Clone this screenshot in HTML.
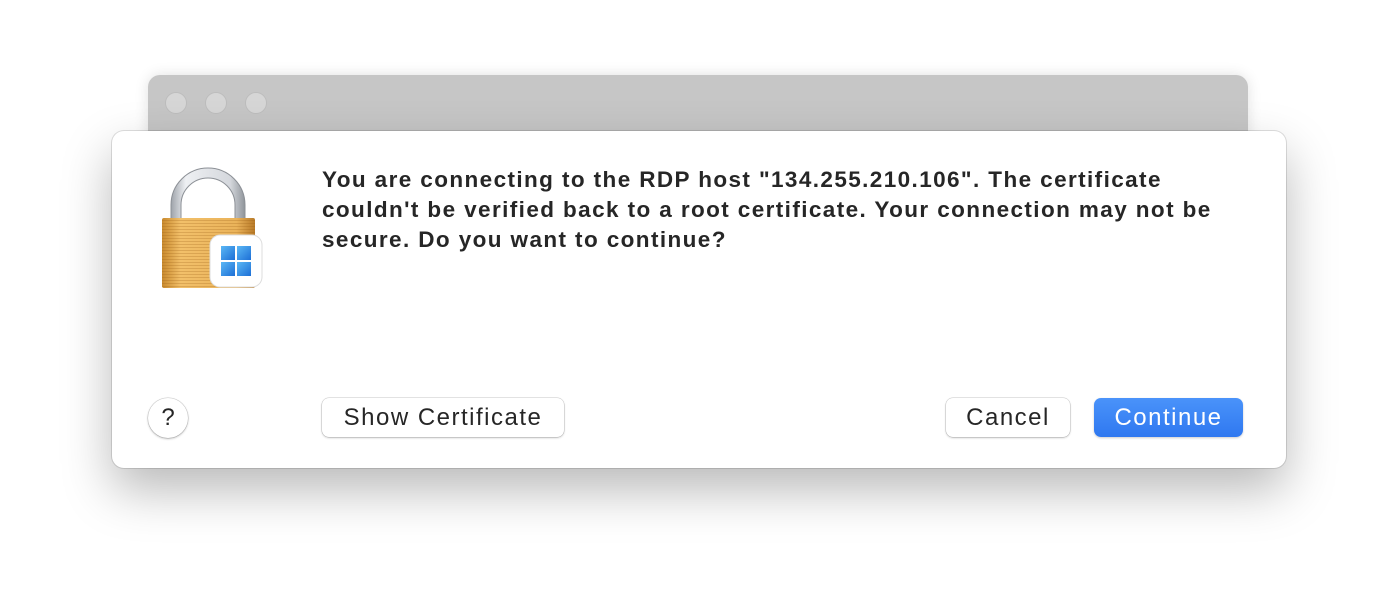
<!DOCTYPE html>
<html><head><meta charset="utf-8"><style>
html,body{margin:0;padding:0;width:1398px;height:616px;background:#fff;overflow:hidden;font-family:"Liberation Sans",sans-serif;}
.back{position:absolute;left:148px;top:75px;width:1100px;height:80px;background:#c6c6c6;border-radius:12px 12px 0 0;box-shadow:0 0 14px rgba(0,0,0,0.12);}
.tl{position:absolute;top:92px;width:22px;height:22px;border-radius:50%;background:#d6d6d6;border:1px solid #bdbdbd;box-sizing:border-box;}
.dlg{position:absolute;left:112px;top:131px;width:1174px;height:337px;background:#fff;border-radius:12px;box-shadow:0 22px 50px rgba(0,0,0,0.28),0 0 0 1px rgba(0,0,0,0.12);}
.msg{position:absolute;left:210px;top:34px;width:1000px;white-space:nowrap;font-weight:bold;font-size:22.5px;letter-spacing:1.4px;line-height:30px;color:#262626;}
.btn{position:absolute;top:267px;height:39px;border-radius:7px;background:#fff;box-shadow:0 0 0 0.5px rgba(0,0,0,0.2),0 1px 2px rgba(0,0,0,0.2);font-size:24px;letter-spacing:1.5px;color:#262626;text-align:center;line-height:39px;}
.blue{background:linear-gradient(#4a93fa,#2f78f0);color:#fff;box-shadow:0 1px 2px rgba(0,0,0,0.2);}
.help{position:absolute;left:36px;top:267px;width:40px;height:40px;border-radius:50%;background:#fff;box-shadow:0 0 0 0.5px rgba(0,0,0,0.2),0 1px 2px rgba(0,0,0,0.25);text-align:center;line-height:40px;font-size:24px;color:#262626;}
</style></head><body>
<div class="back"></div>
<div class="tl" style="left:165px"></div>
<div class="tl" style="left:205px"></div>
<div class="tl" style="left:245px"></div>
<div class="dlg">
<svg style="position:absolute;left:48px;top:35px" width="106" height="125" viewBox="0 0 106 125">
<defs>
<linearGradient id="sh" x1="0" x2="1"><stop offset="0" stop-color="#9ea3aa"/><stop offset="0.2" stop-color="#eef0f3"/><stop offset="0.8" stop-color="#d5d8dd"/><stop offset="1" stop-color="#8f949a"/></linearGradient>
<linearGradient id="bd" x1="0" x2="1"><stop offset="0" stop-color="#c98a2e"/><stop offset="0.2" stop-color="#f2c06a"/><stop offset="0.8" stop-color="#eab35a"/><stop offset="1" stop-color="#b87a28"/></linearGradient>
<pattern id="st" width="4" height="3" patternUnits="userSpaceOnUse"><rect width="4" height="1" fill="rgba(150,90,20,0.25)"/></pattern>
<linearGradient id="wb" x1="0" y1="0" x2="1" y2="1"><stop offset="0" stop-color="#5bb8f5"/><stop offset="1" stop-color="#1d6fd6"/></linearGradient>
</defs>
<path d="M11 55 V39 A37 37 0 0 1 85 39 V55 H75 V39 A27 27 0 0 0 21 39 V55 Z" fill="url(#sh)" stroke="#8c9096" stroke-width="1"/>
<rect x="2" y="52" width="93" height="70" rx="2" fill="url(#bd)"/>
<rect x="2" y="52" width="93" height="70" rx="2" fill="url(#st)"/>
<rect x="50" y="69" width="52" height="52" rx="10" fill="#fff" stroke="#ddd"/>
<rect x="61" y="80" width="14" height="14" fill="url(#wb)"/><rect x="77" y="80" width="14" height="14" fill="url(#wb)"/>
<rect x="61" y="96" width="14" height="14" fill="url(#wb)"/><rect x="77" y="96" width="14" height="14" fill="url(#wb)"/>
</svg>
<div class="msg">You are connecting to the RDP host "134.255.210.106". The certificate<br>couldn't be verified back to a root certificate. Your connection may not be<br>secure. Do you want to continue?</div>
<div class="help">?</div>
<div class="btn" style="left:210px;width:242px">Show Certificate</div>
<div class="btn" style="left:834px;width:124px">Cancel</div>
<div class="btn blue" style="left:982px;width:149px">Continue</div>
</div>
</body></html>
